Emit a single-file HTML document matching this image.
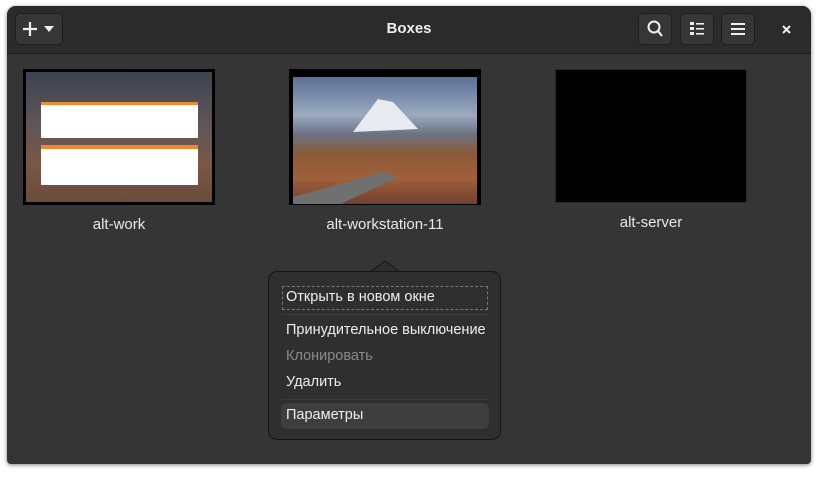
<!DOCTYPE html><html><head><style>
body{margin:0;width:824px;height:478px;background:#fff;font-family:"Liberation Sans",sans-serif;position:relative;overflow:hidden}
.win{position:absolute;left:7px;top:6px;width:804px;height:458px;background:#353535;border-radius:9px 9px 4px 4px;box-shadow:0 1px 4px rgba(0,0,0,.5);overflow:hidden}
.hdr{position:absolute;left:0;top:0;width:804px;height:47px;background:#2b2b2b;border-bottom:1px solid #1c1c1c}
.btn{position:absolute;top:7px;height:32px;background:#363636;border:1px solid #1e1e1e;border-radius:5px;box-sizing:border-box}
.title{position:absolute;left:0;width:804px;top:14px;text-align:center;color:#eee;font-weight:bold;font-size:15px}
.th{position:absolute;background:#000}
.lbl{position:absolute;color:#e8e8e8;font-size:15px;text-align:center;width:240px}
.pop{position:absolute;left:268px;top:271px;width:233px;height:169px;background:#2f2f2f;border:1px solid #151515;border-radius:9px;box-sizing:border-box}
.it{position:absolute;left:17px;color:#eee;font-size:14.5px}
.sep{position:absolute;left:13px;width:206px;height:1px;background:#3c3c3c}
</style></head><body>
<div class="win">
<div class="hdr">
<div class="btn" style="left:8px;width:48px"><svg width="46" height="30"><path d="M14 8v14M7 15h14" stroke="#eee" stroke-width="2.2"/><path d="M28 12h10l-5 6z" fill="#eee"/></svg></div>
<div class="title">Boxes</div>
<div class="btn" style="left:631px;width:34px"><svg width="32" height="30"><circle cx="15" cy="13" r="5.5" fill="none" stroke="#eee" stroke-width="2"/><path d="M19 17l4 5" stroke="#eee" stroke-width="2.2"/></svg></div>
<div class="btn" style="left:673px;width:34px"><svg width="32" height="30"><g fill="#eee"><rect x="9" y="8" width="4" height="3"/><rect x="9" y="13" width="4" height="3"/><rect x="9" y="18" width="4" height="3"/><rect x="15" y="9" width="8" height="1.6"/><rect x="15" y="14" width="8" height="1.6"/><rect x="15" y="19" width="8" height="1.6"/></g></svg></div>
<div class="btn" style="left:714px;width:34px"><svg width="32" height="30"><g fill="#eee"><rect x="9" y="9" width="14" height="2"/><rect x="9" y="14" width="14" height="2"/><rect x="9" y="19" width="14" height="2"/></g></svg></div>
<svg style="position:absolute;left:773px;top:17px" width="14" height="14"><path d="M3 3l7 7M10 3l-7 7" stroke="#eee" stroke-width="2"/></svg>
</div>
<div class="th" style="left:16px;top:63px;width:192px;height:136px">
 <div style="position:absolute;left:3px;top:3px;width:186px;height:130px;background:linear-gradient(#3e4350,#5e5558 40%,#7a5848 70%,#6a4a3a)"></div>
 <div style="position:absolute;left:18px;top:33px;width:157px;height:33px;background:#fff;border-top:3px solid #f08a30"></div>
 <div style="position:absolute;left:18px;top:76px;width:157px;height:36px;background:#fff;border-top:4px solid #f08a30"></div>
</div>
<div class="th" style="left:282px;top:63px;width:192px;height:136px">
 <div style="position:absolute;left:4px;top:8px;width:184px;height:127px;background:linear-gradient(#5a6f95 0%,#9aaac0 30%,#6b7383 45%,#8a5a3a 60%,#a0603a 80%,#704030)"></div>
 <svg style="position:absolute;left:4px;top:8px" width="184" height="127"><path d="M60 55L85 22L100 25L125 52Z" fill="#e8eaf0"/><path d="M0 140L0 120L90 95L105 100L20 140Z" fill="#707070"/></svg>
</div>
<div class="th" style="left:548px;top:63px;width:192px;height:134px;border:1px solid #2a2a2a;box-sizing:border-box"></div>
<div class="lbl" style="left:-8px;top:210px">alt-work</div>
<div class="lbl" style="left:258px;top:210px">alt-workstation-11</div>
<div class="lbl" style="left:524px;top:208px">alt-server</div>
</div>
<svg style="position:absolute;left:370px;top:260px" width="32" height="13"><path d="M0 12L15 1L30 12" fill="#2f2f2f" stroke="#151515"/></svg>
<div class="pop">
 <div style="position:absolute;left:13px;top:14px;width:206px;height:24px;border:1px dashed #777;box-sizing:border-box"></div>
 <div class="it" style="top:17px">Открыть в новом окне</div>
 <div class="sep" style="top:42px"></div>
 <div class="it" style="top:50px">Принудительное выключение</div>
 <div class="it" style="top:76px;color:#8a8a8a">Клонировать</div>
 <div class="it" style="top:102px">Удалить</div>
 <div class="sep" style="top:127px"></div>
 <div style="position:absolute;left:12px;top:131px;width:208px;height:26px;background:#3e3e3e;border-radius:5px"></div>
 <div class="it" style="top:135px">Параметры</div>
</div>
</body></html>
